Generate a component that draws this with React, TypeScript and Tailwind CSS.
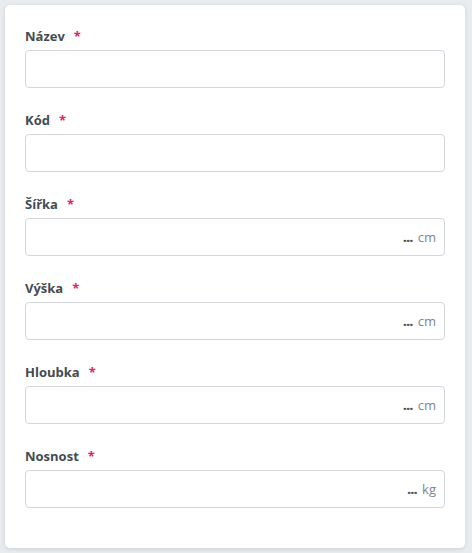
import React from "react";

const fields = [
  { label: "Název", unit: "" },
  { label: "Kód", unit: "" },
  { label: "Šířka", unit: "cm" },
  { label: "Výška", unit: "cm" },
  { label: "Hloubka", unit: "cm" },
  { label: "Nosnost", unit: "kg" },
];

export default function App() {
  return (
    <div className="w-[472px] h-[553px] bg-[#e9ecef] pt-[5px] pl-[5px] font-['Open_Sans',sans-serif]">
      <div className="w-[460px] h-[543px] bg-white rounded-[5px] shadow-[0_1px_4px_rgba(0,0,0,0.12)] px-[20px] pt-[22px]">
        <div className="flex flex-col gap-[23px]">
          {fields.map((f) => (
            <div key={f.label} className="flex flex-col gap-[4px]">
              <label className="text-[13px] leading-[19px] font-bold text-[#444b52] flex items-center">
                {f.label}
                <span className="text-[#e0245e] ml-[9px] text-[13px]">*</span>
              </label>
              <div className="w-[420px] h-[38px] border border-[#d3d7dc] rounded-[4px] flex items-center justify-end pr-[8px]">
                {f.unit && (
                  <span className="text-[13px] flex items-center pt-[2px]">
                    <span className="font-extrabold text-[#555] tracking-[-0.5px] mr-[5px]">...</span>
                    <span className="text-[#7a8597]">{f.unit}</span>
                  </span>
                )}
              </div>
            </div>
          ))}
        </div>
      </div>
    </div>
  );
}
